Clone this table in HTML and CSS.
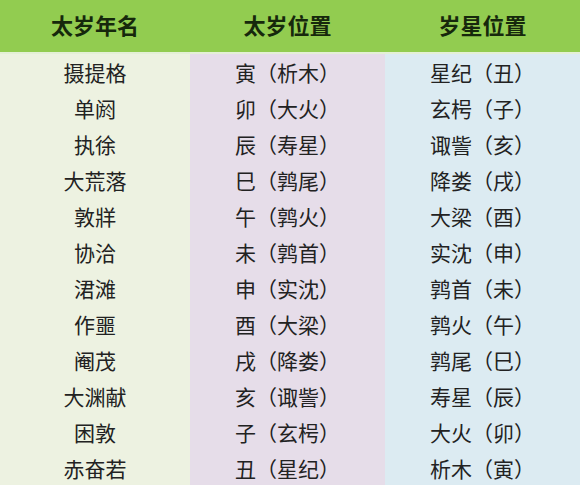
FILE: index.html
```html
<!DOCTYPE html>
<html lang="zh-CN">
<head>
<meta charset="utf-8">
<title>太岁年名</title>
<link rel="stylesheet" href="styles.css">
</head>
<body>
<div class="table">
  <div class="head">太岁年名</div><div class="head">太岁位置</div><div class="head">岁星位置</div>
  <div class="c1">摄提格</div><div class="c2">寅（析木）</div><div class="c3">星纪（丑）</div>
  <div class="c1">单阏</div><div class="c2">卯（大火）</div><div class="c3">玄枵（子）</div>
  <div class="c1">执徐</div><div class="c2">辰（寿星）</div><div class="c3">诹訾（亥）</div>
  <div class="c1">大荒落</div><div class="c2">巳（鹑尾）</div><div class="c3">降娄（戌）</div>
  <div class="c1">敦牂</div><div class="c2">午（鹑火）</div><div class="c3">大梁（酉）</div>
  <div class="c1">协洽</div><div class="c2">未（鹑首）</div><div class="c3">实沈（申）</div>
  <div class="c1">涒滩</div><div class="c2">申（实沈）</div><div class="c3">鹑首（未）</div>
  <div class="c1">作噩</div><div class="c2">酉（大梁）</div><div class="c3">鹑火（午）</div>
  <div class="c1">阉茂</div><div class="c2">戌（降娄）</div><div class="c3">鹑尾（巳）</div>
  <div class="c1">大渊献</div><div class="c2">亥（诹訾）</div><div class="c3">寿星（辰）</div>
  <div class="c1">困敦</div><div class="c2">子（玄枵）</div><div class="c3">大火（卯）</div>
  <div class="c1">赤奋若</div><div class="c2">丑（星纪）</div><div class="c3">析木（寅）</div>
</div>
</body>
</html>
```

FILE: styles.css
```css
html, body {
  margin: 0;
  padding: 0;
  background: #ffffff;
}
body {
  font-family: "Noto Sans CJK SC", "Microsoft YaHei", sans-serif;
  overflow: hidden;
}
.table {
  display: grid;
  grid-template-columns: 190px 195px 195px;
  grid-template-rows: 54px;
  grid-auto-rows: 36px;
  width: 580px;
}
.table > div {
  display: flex;
  align-items: center;
  justify-content: center;
  font-size: 21px;
  color: #222222;
  line-height: 1;
}
.table > .head {
  background: #92cc50;
  border-bottom: 2px solid #e4f0d6;
  box-sizing: border-box;
  font-size: 22px;
  font-weight: 700;
  color: #16280c;
  padding-bottom: 4px;
}
.c1 { background: #edf2e1; }
.c2 { background: #e6dde9; }
.c3 { background: #dcebf2; }
```
